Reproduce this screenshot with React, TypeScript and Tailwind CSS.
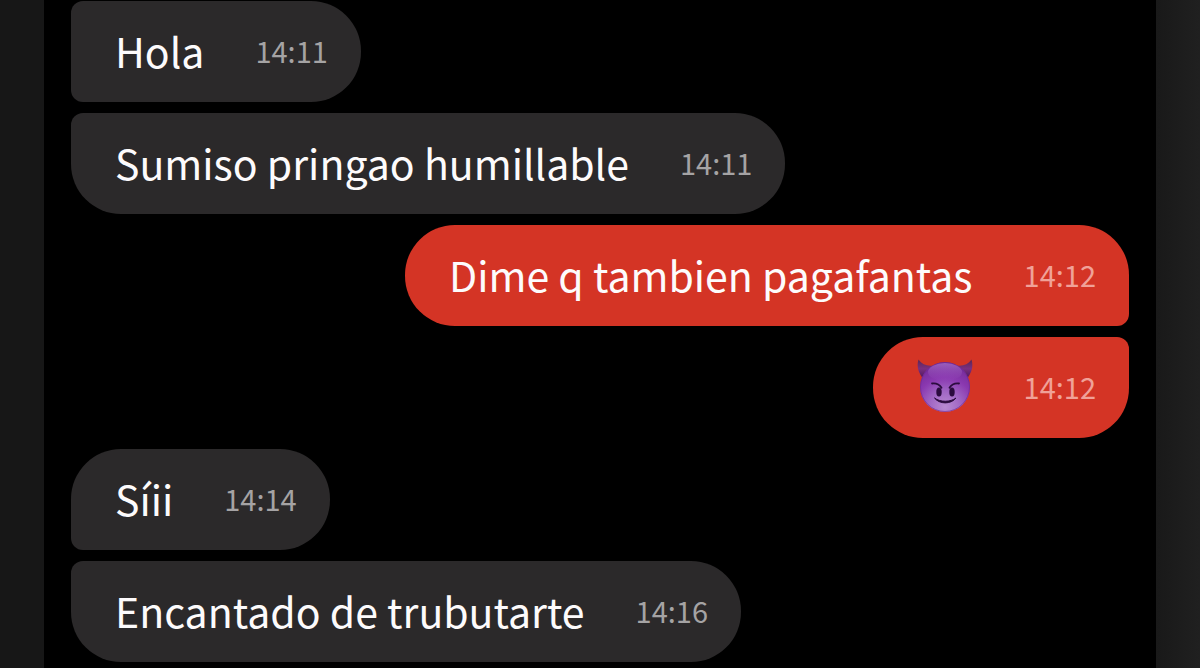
import React from "react";
import clsx from "clsx";

interface Message {
    id: number;
    text?: string;
    time: string;
    mine: boolean;
    // tighter corner on the side that touches a neighbour bubble
    joinsAbove: boolean;
    joinsBelow: boolean;
}

const messages: Message[] = [
    { id: 1, text: "Hola", time: "14:11", mine: false, joinsAbove: true, joinsBelow: true },
    { id: 2, text: "Sumiso pringao humillable", time: "14:11", mine: false, joinsAbove: true, joinsBelow: false },
    { id: 3, text: "Dime q tambien pagafantas", time: "14:12", mine: true, joinsAbove: false, joinsBelow: true },
    { id: 4, time: "14:12", mine: true, joinsAbove: true, joinsBelow: false },
    { id: 5, text: "Síii", time: "14:14", mine: false, joinsAbove: false, joinsBelow: true },
    { id: 6, text: "Encantado de trubutarte", time: "14:16", mine: false, joinsAbove: true, joinsBelow: false },
];

const DevilEmoji: React.FC = () => (
    <svg viewBox="0 0 56 56" className="w-14 h-14 shrink-0" role="img" aria-label="smiling face with horns">
        <defs>
            <radialGradient id="face" cx="0.5" cy="0.9" r="0.9">
                <stop offset="0" stopColor="#b98ad2" />
                <stop offset="0.35" stopColor="#a066c4" />
                <stop offset="0.65" stopColor="#8a38b0" />
                <stop offset="1" stopColor="#722a96" />
            </radialGradient>
            <linearGradient id="shine" x1="0" y1="0" x2="0" y2="1">
                <stop offset="0" stopColor="#b98ad8" stopOpacity="0.55" />
                <stop offset="1" stopColor="#a45fca" stopOpacity="0" />
            </linearGradient>
            <linearGradient id="horn" x1="0" y1="0" x2="0" y2="1">
                <stop offset="0" stopColor="#5c2650" />
                <stop offset="0.5" stopColor="#7a2f80" />
                <stop offset="1" stopColor="#4e1660" />
            </linearGradient>
        </defs>
        <path d="M1.5 1.5C-.5 8 1 14 5.500 20L17 7.500C10 8.500 5 6.500 1.500 1.500Z" fill="url(#horn)" />
        <path d="M54.500 1.500C56.500 8 55 14 50.500 20L39 7.500C46 8.500 51 6.500 54.500 1.500Z" fill="url(#horn)" />
        <circle cx="28" cy="29" r="25" fill="url(#face)" />
        <circle cx="28" cy="29" r="24.500" fill="none" stroke="#6d2795" strokeOpacity="0.6" />
        <ellipse cx="28" cy="14" rx="17" ry="9" fill="url(#shine)" />
        <ellipse cx="22" cy="34" rx="2.700" ry="4.600" fill="#2b0b3f" />
        <ellipse cx="35" cy="34" rx="2.700" ry="4.600" fill="#2b0b3f" />
        <path d="M15 25.500C19 25 22.500 26.500 24.500 29.800" fill="none" stroke="#2b0b3f" strokeWidth="1.800" strokeLinecap="round" />
        <path d="M42 25.500C38 25 34.500 26.500 32.500 29.800" fill="none" stroke="#2b0b3f" strokeWidth="1.800" strokeLinecap="round" />
        <path d="M17.500 40C22.500 46.500 34 46.500 39 40C33.500 44.300 23 44.300 17.500 40Z" fill="#2b0b3f" stroke="#2b0b3f" strokeWidth="1" strokeLinejoin="round" />
    </svg>
);

const Bubble: React.FC<{ message: Message }> = ({ message }) => {
    const { text, time, mine, joinsAbove, joinsBelow } = message;

    return (
        <li
            className={clsx(
                "flex items-center gap-[51px] min-h-[101px] pl-11 pr-[33px] pb-1 rounded-[50px]",
                mine ? "self-end bg-[#d43425]" : "self-start bg-[#2b292a]",
                joinsAbove && (mine ? "rounded-tr-xl" : "rounded-tl-xl"),
                joinsBelow && (mine ? "rounded-br-xl" : "rounded-bl-xl")
            )}
        >
            {text ? (
                <p className="text-[41px] leading-[60px] text-[#fdfbfc]">{text}</p>
            ) : (
                <DevilEmoji />
            )}
            <time
                className={clsx(
                    "text-[29px] leading-10",
                    mine ? "text-[#f0a198]" : "text-[#a5a3a4]"
                )}
            >
                {time}
            </time>
        </li>
    );
};

const App: React.FC = () => {
    return (
        <div className="flex min-h-screen bg-black font-['Noto_Sans_CJK_SC','Noto_Sans',sans-serif]">
            <div className="w-11 shrink-0 bg-[#171717]" />
            <main className="flex-1 px-[27px] pt-px">
                <ul className="flex flex-col gap-[11px]">
                    {messages.map((message) => (
                        <Bubble key={message.id} message={message} />
                    ))}
                </ul>
            </main>
            <div className="w-11 shrink-0 bg-linear-to-r from-[#191919] to-[#202020]" />
        </div>
    );
};

export default App;
